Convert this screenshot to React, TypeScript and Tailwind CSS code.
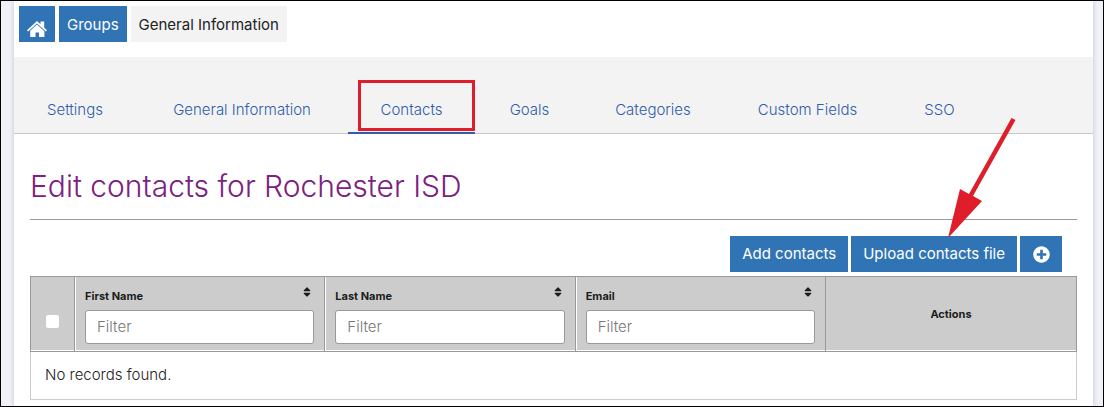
import { FaPlusCircle, FaSort } from "react-icons/fa";

const tabs = [
  { label: "Settings", width: "w-[122px]" },
  { label: "General Information", width: "w-[206px]" },
  { label: "Contacts", width: "w-[127px]" },
  { label: "Goals", width: "w-[103px]" },
  { label: "Categories", width: "w-[138px]" },
  { label: "Custom Fields", width: "w-[165px]" },
  { label: "SSO", width: "w-[93px]" },
];

const columns = ["First Name", "Last Name", "Email"];

function HomeIcon() {
  return (
    <svg aria-hidden="true" width="20" height="16" viewBox="0 0 20 16" fill="currentColor">
      <path d="M10 0L13.500 3.300V.4H17.200V6.700L20 9.300L18.900 10.400L10 2.400L1.100 10.400L0 9.300Z" />
      <path d="M10 3.600L17.400 10.200V16H12V11.500H8.500V16H3.200V9.700Z" />
    </svg>
  );
}

function Breadcrumbs() {
  return (
    <nav aria-label="Breadcrumb" className="flex h-9 gap-1 px-[5px] whitespace-nowrap">
      <a href="#home" aria-label="Home" className="flex w-9 items-center justify-center bg-[#3174b5] pt-[10px] text-white">
        <HomeIcon />
      </a>
      <a href="#groups" className="flex items-center bg-[#3174b5] px-2 pt-[3px] text-white">Groups</a>
      <span className="flex items-center bg-[#f3f3f3] px-2 pt-[3px] text-[#222]">General Information</span>
    </nav>
  );
}

function Tabs() {
  return (
    <nav aria-label="Sections" className="mt-[15px] flex h-[77px] items-end gap-[3px] border-b border-[#c8c8c8] bg-[#f3f3f3] whitespace-nowrap">
      {tabs.map(({ label, width }) => {
        const active = label === "Contacts";
        return (
          <a
            key={label}
            href="#"
            aria-current={active ? "page" : undefined}
            className={`relative -mb-px flex h-[46px] items-center justify-center border-b-2 font-light text-[#2f5cab] ${width} ${active ? "border-[#2f5cab]" : "border-transparent"}`}
          >
            {label}
            {active && <span className="absolute right-0 bottom-px h-[51px] w-[117px] border-[3px] border-[#de1e2a]" />}
          </a>
        );
      })}
    </nav>
  );
}

function ContactsTable() {
  return (
    <table className="mt-1 w-full table-fixed border-separate border-spacing-0">
      <thead>
        <tr className="h-[76px] bg-[#ccc] text-[11px] text-[#1c1c1c]">
          <th className="w-11 border-y border-l border-[#999] p-0 pt-[14px] shadow-[inset_0_-1px_0_#fff]">
            <input type="checkbox" aria-label="Select all contacts" className="mx-auto block size-[13px] appearance-none rounded-[2px] bg-white" />
          </th>
          {columns.map((name) => (
            <th key={name} className="border-y border-l border-[#999] px-[10px] pt-px pb-0 text-left shadow-[inset_1px_-1px_0_#fff]">
              <div className="flex h-5 items-start justify-between">
                <label htmlFor={name} className="leading-5">{name}</label>
                <button type="button" aria-label={`Sort by ${name}`} className="pr-px"><FaSort size={12} /></button>
              </div>
              <input id={name} placeholder="Filter" className="mt-1 block h-[34px] w-full rounded-[3px] border border-[#999] bg-white px-[11px] text-[15px] font-light placeholder:text-[#777]" />
            </th>
          ))}
          <th className="w-[252px] border border-[#999] shadow-[inset_0_-1px_0_#fff]">Actions</th>
        </tr>
      </thead>
      <tbody>
        <tr>
          <td colSpan={5} className="h-12 border-x border-b border-[#ccc] px-[14px] font-light text-[#222]">No records found.</td>
        </tr>
      </tbody>
    </table>
  );
}

export default function App() {
  return (
    <div className="min-h-screen border border-black bg-[#f1f2f7] pr-[10px] pl-[13px] font-['Inter',sans-serif] text-[15px]">
      <main className="min-h-[405px] bg-white pt-[5px] shadow-[0_0_5px_rgba(0,0,0,0.2)]">
        <Breadcrumbs />
        <Tabs />
        <section className="px-4">
          <h1 className="flex h-[86px] items-center border-b border-[#999] pt-5 text-[30px] font-light text-[#7c217f]">Edit contacts for Rochester ISD</h1>
          <div className="mt-4 flex h-9 justify-end gap-[3px] pr-[15px] text-white">
            <button type="button" className="bg-[#3174b5] px-3">Add contacts</button>
            <div className="relative">
              <button type="button" className="h-full bg-[#3174b5] px-3">Upload contacts file</button>
              <svg aria-hidden="true" className="pointer-events-none absolute right-0 bottom-full -mb-0.5" width="71" height="121" viewBox="0 0 71 121">
                <path d="M65.500 1L69.500 3L27 79L36 84L2 121L14 72L23 77Z" fill="#de1e2a" />
              </svg>
            </div>
            <button type="button" aria-label="More actions" className="flex w-[42px] items-center justify-center bg-[#3174b5]"><FaPlusCircle size={17} /></button>
          </div>
          <ContactsTable />
        </section>
      </main>
    </div>
  );
}
